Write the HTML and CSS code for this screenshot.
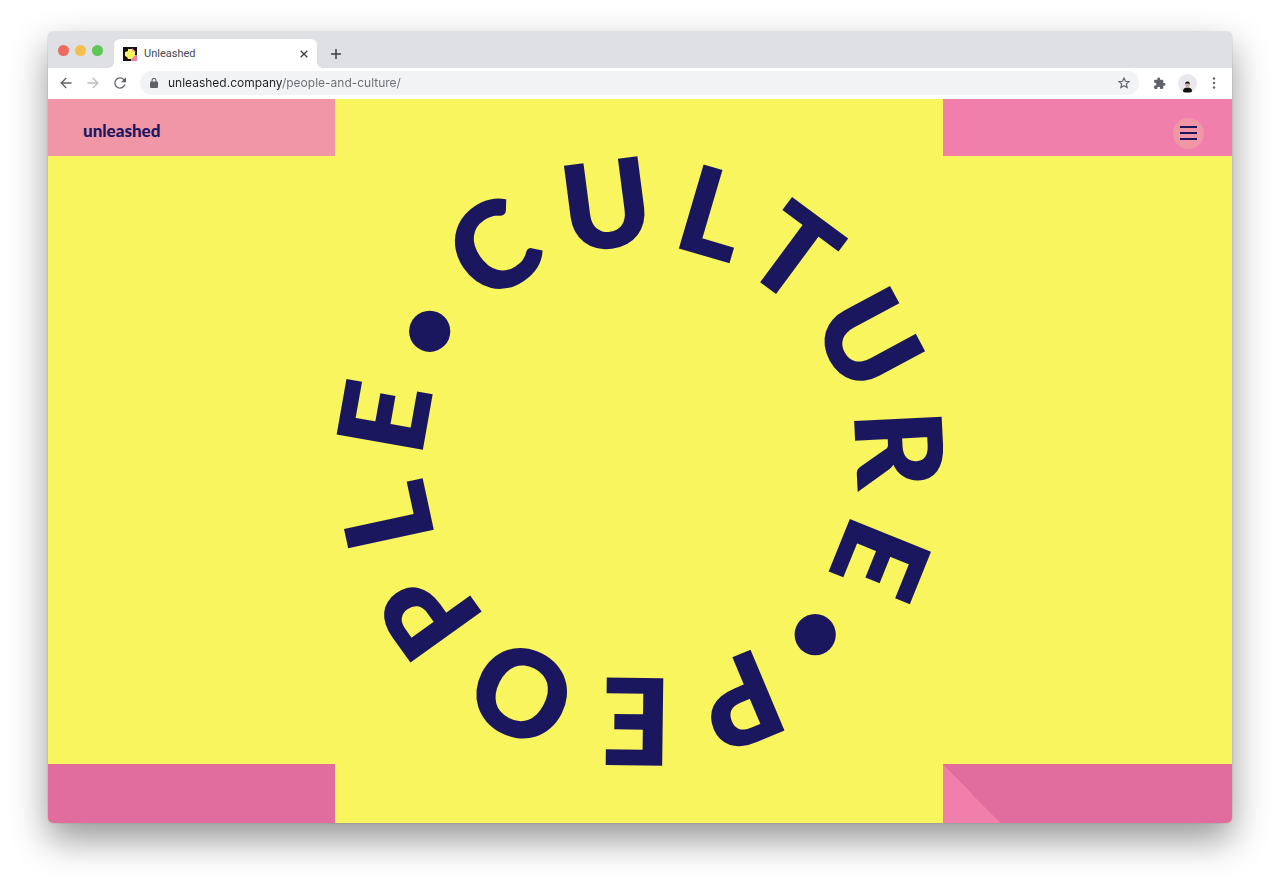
FILE: index.html
```
<!DOCTYPE html>
<html lang="en">
<head>
  <meta charset="UTF-8" />
  <meta name="viewport" content="width=device-width, initial-scale=1.0" />
  <title>Unleashed</title>
  <link rel="stylesheet" href="styles.css">
</head>
<body>

  <div class="window">

    <!-- Tab strip -->
    <div class="tabs">
      <div class="lights">
        <span class="light red"></span>
        <span class="light amber"></span>
        <span class="light green"></span>
      </div>
      <div class="tab">
        <svg class="favicon" width="14" height="14" viewBox="0 0 14 14">
          <path fill="#17100f" d="M0 0h14v14H0z" />
          <path fill="#ee7fae" d="M8 8h6v6H8z" />
          <path fill="#f096a7" d="M9 1l4 4H9z" />
          <path fill="#f9f55f" d="M5 2h4v2l3 1v4l-2 1-1 2H5l-1-2-2-1V5l3-1z" />
        </svg>
        <span class="tab-title">Unleashed</span>
        <button class="icon-btn" aria-label="Close tab">
          <svg width="8" height="8" viewBox="0 0 8 8" fill="none" stroke="#3c4043" stroke-width="1.3">
            <path d="M.7.7l6.6 6.6M7.3.7L.7 7.3" />
          </svg>
        </button>
      </div>
      <button class="icon-btn new-tab" aria-label="New tab">
        <svg width="10" height="10" viewBox="0 0 10 10" fill="none" stroke="#3c4043" stroke-width="1.5">
          <path d="M5 0v10M0 5h10" />
        </svg>
      </button>
    </div>

    <!-- Toolbar -->
    <div class="toolbar">
      <div class="nav-buttons">
        <button class="icon-btn" aria-label="Back">
          <svg width="12" height="12" viewBox="0 0 12 12" fill="none" stroke="#5f6368" stroke-width="1.3">
            <path d="M11.5 6H1.5M6.2 1L1.2 6l5 5" />
          </svg>
        </button>
        <button class="icon-btn" aria-label="Forward">
          <svg width="12" height="12" viewBox="0 0 12 12" fill="none" stroke="#babcbe" stroke-width="1.3">
            <path d="M.5 6h10M5.8 1l5 5-5 5" />
          </svg>
        </button>
        <button class="icon-btn" aria-label="Reload">
          <svg width="12" height="12" viewBox="0 0 12 12">
            <path fill="none" stroke="#5f6368" stroke-width="1.3" d="M10.9 7.4A5.1 5.1 0 1 1 9.8 2.5L11 3.8" />
            <path fill="#5f6368" d="M12 .3v5H7z" />
          </svg>
        </button>
      </div>
      <div class="address">
        <svg width="8" height="10" viewBox="0 0 8 10">
          <path fill="#5f6368" d="M1 3.6h6q1 0 1 1V9q0 1-1 1H1q-1 0-1-1V4.600q0-1 1-1z" />
          <path fill="none" stroke="#5f6368" stroke-width="1.1" d="M2 4V2.500a2 2 0 0 1 4 0V4" />
        </svg>
        <input class="url" type="text" aria-label="Address" value="unleashed.company/people-and-culture/">
        <button class="icon-btn" aria-label="Bookmark this page">
          <svg width="12" height="12" viewBox="0 0 12 12" fill="none" stroke="#5f6368" stroke-width="1.1">
            <path d="M6 1l1.400 3.300 3.700.3-2.800 2.400.9 3.600L6 8.700l-3.200 1.900.9-3.600L.9 4.600l3.700-.3z" />
          </svg>
        </button>
      </div>
      <div class="extras">
        <button class="icon-btn" aria-label="Extensions">
          <svg width="13" height="13" viewBox="0 0 24 24" fill="#5f6368">
            <path d="M20.500 11H19V7a2 2 0 0 0-2-2h-4V3.500a2.500 2.500 0 0 0-5 0V5H4a2 2 0 0 0-2 2v3.800h1.500a2.700 2.700 0 0 1 0 5.400H2V20a2 2 0 0 0 2 2h3.800v-1.500a2.700 2.700 0 0 1 5.400 0V22H17a2 2 0 0 0 2-2v-4h1.500a2.500 2.500 0 0 0 0-5z" />
          </svg>
        </button>
        <button class="icon-btn" aria-label="Profile">
          <svg width="19" height="19" viewBox="0 0 19 19">
            <circle cx="9.500" cy="9.500" r="9.500" fill="#eae8ec" />
            <path fill="#111" d="M5 17q0-3.500 4.500-3.500T14 17q0 1.500-4.500 1.500T5 17z" />
            <ellipse cx="9.500" cy="11" rx="2" ry="2.700" fill="#c9aaa0" />
            <path fill="#111" d="M7.300 10.800Q6.800 7.500 9.500 7.500t2.200 3.300L11 9.600H8z" />
          </svg>
        </button>
        <button class="icon-btn more" aria-label="Menu">
          <svg width="4" height="12" viewBox="0 0 4 12" fill="#5f6368">
            <circle cx="2" cy="1.500" r="1.200" />
            <circle cx="2" cy="6" r="1.200" />
            <circle cx="2" cy="10.500" r="1.200" />
          </svg>
        </button>
      </div>
    </div>

    <!-- Page -->
    <main class="page">
      <header class="corner top-left">
        <a class="logo" href="#">unleashed</a>
      </header>
      <div class="corner top-right">
        <button class="menu-btn" aria-label="Open menu">
          <span class="menu-line"></span>
          <span class="menu-line"></span>
          <span class="menu-line"></span>
        </button>
      </div>

      <svg class="ring" viewBox="0 0 608 608">
        <defs>
          <path id="circle" d="M305 89a217 217 0 0 1 0 434a217 217 0 0 1 0-434" />
        </defs>
        <!-- x is the distance along the circle of each letter's middle -->
        <g transform="rotate(-60 305 306)">
          <text class="ring-text" text-anchor="middle">
            <textPath href="#circle"><tspan x="97 199 289 365 461 557 651">CULTURE</tspan><tspan x="822 911 1011 1114 1203 1287">PEOPLE</tspan></textPath>
          </text>
        </g>
        <circle class="ring-dot" cx="94.700" cy="175.300" r="20.600" />
        <circle class="ring-dot" cx="480.200" cy="478.600" r="20.600" />
      </svg>

      <div class="corner bottom-left"></div>
      <div class="corner bottom-right"></div>
    </main>

  </div>

</body>
</html>
```
FILE: styles.css
```
* {
  margin: 0;
  padding: 0;
  box-sizing: border-box;
}

body {
  min-height: 100vh;
  padding: 32px 48px 63px;
  display: flex;
  background: #fff;
  font-family: Inter, 'Liberation Sans', sans-serif;
}

button {
  border: 0;
  background: none;
  cursor: pointer;
}

.window {
  flex: 1;
  display: flex;
  flex-direction: column;
  border-radius: 5px;
  overflow: hidden;
  box-shadow: 0 0 1px rgba(0, 0, 0, 0.5), 0 16px 36px rgba(0, 0, 0, 0.42);
}

.icon-btn {
  display: flex;
  align-items: center;
  justify-content: center;
}

/* Tab strip */
.tabs {
  height: 36px;
  display: flex;
  align-items: flex-end;
  background: #dee0e4;
}

.lights {
  display: flex;
  gap: 6px;
  padding: 0 11px 12px 10px;
}

.light {
  width: 11px;
  height: 11px;
  border-radius: 50%;
}

.red {
  background: #ed6a5f;
}

.amber {
  background: #f5bf4f;
}

.green {
  background: #5fc753;
}

.tab {
  position: relative;
  width: 203px;
  height: 29px;
  display: flex;
  align-items: center;
  gap: 7px;
  padding: 0 9px;
  border-radius: 6px 6px 0 0;
  background: #fff;
}

.tab::before,
.tab::after {
  content: '';
  position: absolute;
  bottom: 0;
  width: 6px;
  height: 6px;
}

.tab::before {
  right: 100%;
  background: radial-gradient(circle at 0 0, transparent 6px, #fff 6px);
}

.tab::after {
  left: 100%;
  background: radial-gradient(circle at 100% 0, transparent 6px, #fff 6px);
}

.tab-title {
  flex: 1;
  font-family: Roboto, sans-serif;
  font-size: 11px;
  line-height: 16px;
  color: #45484c;
}

.new-tab {
  height: 29px;
  padding: 0 14px;
}

/* Toolbar */
.toolbar {
  height: 31px;
  display: flex;
  align-items: center;
  gap: 14px;
  padding: 0 13px 1px 12px;
  background: #fff;
}

.nav-buttons {
  display: flex;
  gap: 15px;
}

.address {
  flex: 1;
  height: 24px;
  display: flex;
  align-items: center;
  gap: 10px;
  padding: 0 9px 0 10px;
  border-radius: 12px;
  background: #f1f3f4;
}

/* host name dark, rest of the address grey */
.url {
  flex: 1;
  border: 0;
  outline: 0;
  font-family: inherit;
  font-size: 12px;
  line-height: 16px;
  color: transparent;
  background: linear-gradient(90deg, #202124 114px, #696c70 114px);
  -webkit-background-clip: text;
  background-clip: text;
}

.extras {
  display: flex;
  align-items: center;
  gap: 12px;
}

.more {
  padding: 0 3px;
}

/* Page */
.page {
  flex: 1;
  display: grid;
  grid-template-columns: 287fr 608px 289fr;
  grid-template-rows: 57fr 608px 59fr;
  background: #f9f55f;
}

.corner {
  display: flex;
  align-items: center;
}

.top-left {
  grid-area: 1 / 1;
  padding: 7px 35px 0;
  background: #f096a7;
}

.top-right {
  grid-area: 1 / 3;
  justify-content: flex-end;
  padding: 11px 28px 0;
  background: #f080ab;
}

.bottom-left {
  grid-area: 3 / 1;
  background: #e16d9e;
}

.bottom-right {
  grid-area: 3 / 3;
  background: linear-gradient(to bottom left, #e16d9e 50%, #f080ab 50%) 0 0 / 57px 59px no-repeat #e16d9e;
}

.logo {
  font-family: Lato, sans-serif;
  font-size: 17px;
  font-weight: 900;
  line-height: 20px;
  color: #1a175f;
  text-decoration: none;
}

.menu-btn {
  width: 31px;
  height: 31px;
  display: flex;
  flex-direction: column;
  align-items: center;
  justify-content: center;
  gap: 4px;
  border-radius: 50%;
  background: #f096a7;
}

.menu-line {
  width: 17px;
  height: 2px;
  background: #1a175f;
}

.ring {
  grid-area: 2 / 2;
  width: 100%;
  overflow: visible;
}

.ring-text {
  font-family: Lato, sans-serif;
  font-size: 118px;
  font-weight: 900;
  fill: #1a175f;
  stroke: #1a175f;
  stroke-width: 2px;
}

.ring-dot {
  fill: #1a175f;
}
```
